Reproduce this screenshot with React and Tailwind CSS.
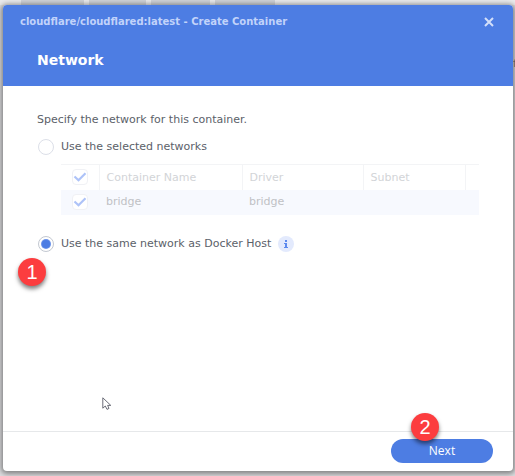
import { useState } from 'react';

const networks = [{ name: 'bridge', driver: 'bridge', subnet: '' }];

function CheckBox({ label, checked, onChange }) {
    return (
        <span className="mx-auto grid h-4 w-4">
            <input
                type="checkbox"
                aria-label={label}
                checked={checked}
                onChange={onChange}
                className="peer col-start-1 row-start-1 h-4 w-4 appearance-none rounded-sm border border-[#f0f1f5] bg-white"
            />
            <svg
                viewBox="0 0 16 16"
                className="pointer-events-none invisible col-start-1 row-start-1 h-4 w-4 peer-checked:visible"
                fill="none"
                stroke="#aec3f8"
                strokeWidth="2.2"
            >
                <path d="M2.5 7.5 L6.5 11.2 L13.5 4.2" />
            </svg>
        </span>
    );
}

function NetworkOption({ id, label, checked, onChange, children }) {
    return (
        <div className="relative flex h-5 items-center">
            <span className="grid h-4 w-4 shrink-0 place-items-center">
                <input
                    type="radio"
                    name="network"
                    id={id}
                    checked={checked}
                    onChange={onChange}
                    className="peer col-start-1 row-start-1 h-4 w-4 appearance-none rounded-full border border-[#dcdfe8] bg-white checked:border-[#c3c8d1]"
                />
                <span className="pointer-events-none invisible col-start-1 row-start-1 h-2 w-2 rounded-full bg-[#4d7de3] ring-1 ring-[#6b93ea] peer-checked:visible" />
            </span>
            <label htmlFor={id} className="pt-px pl-[7px]">
                {label}
            </label>
            {children}
        </div>
    );
}

function StepBadge({ number, className }) {
    return (
        <span
            className={`pointer-events-none absolute flex h-7 w-7 items-center justify-center rounded-full bg-[#fc3d3f] font-['Liberation_Sans',sans-serif] text-xl text-white shadow-[0_3px_4px_rgba(0,0,0,0.5)] ${className}`}
        >
            {number}
        </span>
    );
}

export default function App() {
    const [mode, setMode] = useState('host');
    const [selected, setSelected] = useState(true);
    const toggle = () => setSelected(!selected);

    return (
        <div className="relative flex min-h-screen flex-col overflow-hidden bg-[#dcdddf] font-['DejaVu_Sans',sans-serif] text-[11px] text-[#5b6169]">
            {/* Toolbar and list behind the dialog */}
            <div className="flex h-[5px] gap-[5px] bg-[#e9eaec] pl-[21px]">
                <div className="w-[63px] bg-[#cfd2d7]" />
                <div className="w-[57px] bg-[#cfd2d7]" />
                <div className="w-[59px] bg-[#cfd2d7]" />
                <div className="w-[60px] bg-[#cfd2d7]" />
            </div>
            <span className="absolute top-14 left-full -ml-0.5 text-[#777]">f</span>

            {/* Dialog */}
            <div
                role="dialog"
                aria-labelledby="dialog-title"
                className="relative mr-[2px] mb-[5px] ml-[3px] flex flex-1 flex-col rounded-sm bg-white shadow-[0_1px_5px_2px_rgba(0,0,0,0.4)]"
            >
                <header className="h-[81px] rounded-t-sm bg-[#4d7de3] px-[17px]">
                    <div className="flex h-[33px] items-center justify-between">
                        <h1 id="dialog-title" className="text-[10px] font-bold text-[#c2d3fa]">
                            cloudflare/cloudflared:latest - Create Container
                        </h1>
                        <button type="button" aria-label="Close" className="p-0.5">
                            <svg viewBox="0 0 10 10" className="h-2.5 w-2.5" stroke="#d3dffa" strokeWidth="2" fill="none">
                                <path d="M1 1 L9 9 M9 1 L1 9" />
                            </svg>
                        </button>
                    </div>
                    <h2 className="pt-3 pl-[17px] text-sm font-bold text-white">Network</h2>
                </header>

                <main className="flex-1 px-[34px] pt-6">
                    <p className="h-5 leading-5">Specify the network for this container.</p>
                    <div className="pt-[7px] pl-px">
                        <NetworkOption
                            id="selected-networks"
                            label="Use the selected networks"
                            checked={mode === 'selected'}
                            onChange={() => setMode('selected')}
                        />
                    </div>

                    <div className="pt-[7px] pl-6">
                        <table className="w-full table-fixed border-collapse text-left">
                            <colgroup>
                                <col className="w-[38px]" />
                                <col />
                                <col className="w-[121px]" />
                                <col className="w-[102px]" />
                                <col className="w-[14px]" />
                            </colgroup>
                            <thead>
                                <tr className="h-[25px] border-t border-[#f3f4f6] text-[#d2d4d7]">
                                    <th className="border-r border-[#f3f4f6]">
                                        <CheckBox label="Select all" checked={selected} onChange={toggle} />
                                    </th>
                                    <th className="border-r border-[#f3f4f6] pt-px pl-[7px] font-normal">Container Name</th>
                                    <th className="border-r border-[#f3f4f6] pt-px pl-[7px] font-normal">Driver</th>
                                    <th className="border-r border-[#f3f4f6] pt-px pl-[7px] font-normal">Subnet</th>
                                    <th />
                                </tr>
                            </thead>
                            <tbody>
                                {networks.map((network) => (
                                    <tr key={network.name} className="h-[25px] bg-[#f7f9fe] text-[#bfc1c5]">
                                        <td>
                                            <CheckBox label={network.name} checked={selected} onChange={toggle} />
                                        </td>
                                        <td className="pt-px pl-[7px]">{network.name}</td>
                                        <td className="pt-px pl-[7px]">{network.driver}</td>
                                        <td className="pt-px pl-[7px]">{network.subnet}</td>
                                        <td />
                                    </tr>
                                ))}
                            </tbody>
                        </table>
                    </div>

                    <div className="pt-[19px] pl-px">
                        <NetworkOption
                            id="host-network"
                            label="Use the same network as Docker Host"
                            checked={mode === 'host'}
                            onChange={() => setMode('host')}
                        >
                            <button
                                type="button"
                                aria-label="Info"
                                className="ml-[7px] flex h-4 w-4 items-center justify-center rounded-full bg-[#e3eafd]"
                            >
                                <svg viewBox="0 0 16 16" className="h-4 w-4" fill="#5c89ee">
                                    <path d="M7 4h2v2H7z M6 7h3v4h1v1H6v-1h1V8H6z" />
                                </svg>
                            </button>
                            <StepBadge number={1} className="top-6 -left-5" />
                        </NetworkOption>
                    </div>
                </main>

                <footer className="flex h-10 justify-end border-t border-[#e6e8ea] pt-[7px] pr-5">
                    <div className="relative">
                        <button
                            type="button"
                            className="h-6 w-[102px] rounded-full bg-[#4d7de3] font-['Open_Sans',sans-serif] text-xs text-white"
                        >
                            Next
                        </button>
                        <StepBadge number={2} className="-top-[26px] left-5" />
                    </div>
                </footer>
            </div>

            {/* Mouse pointer */}
            <svg viewBox="0 0 10 14" className="pointer-events-none absolute top-[397px] left-[102px] h-3.5 w-2.5" fill="#fff" stroke="#6b6d78">
                <path d="M0.8 0.8 V11.2 L3.3 9 L5 12.4 L7 11.4 L5.6 8.4 H8.8 Z" />
            </svg>
        </div>
    );
}
